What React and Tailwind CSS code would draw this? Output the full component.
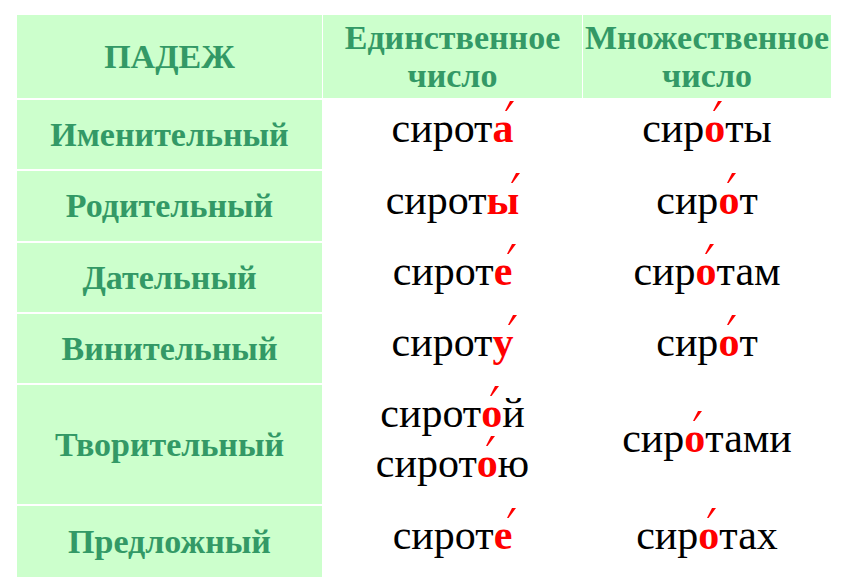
const rows = [
  { name: 'Именительный', sg: [['сирот', 'а', 'left-[80%]', '']], pl: ['сир', 'о', 'left-[62%]', 'ты'], h: 'h-[69px]' },
  { name: 'Родительный', sg: [['сирот', 'ы', 'left-[86%]', '']], pl: ['сир', 'о', 'left-[62%]', 'т'], h: 'h-[70px]' },
  { name: 'Дательный', sg: [['сирот', 'е', 'left-[95%]', '']], pl: ['сир', 'о', 'left-[62%]', 'там'], h: 'h-[69px]' },
  { name: 'Винительный', sg: [['сирот', 'у', 'left-[92%]', '']], pl: ['сир', 'о', 'left-[62%]', 'т'], h: 'h-[69px]' },
  {
    name: 'Творительный',
    sg: [['сирот', 'о', 'left-[62%]', 'й'], ['сирот', 'о', 'left-[62%]', 'ю']],
    pl: ['сир', 'о', 'left-[62%]', 'тами'],
    h: 'h-[119px]',
  },
  { name: 'Предложный', sg: [['сирот', 'е', 'left-[95%]', '']], pl: ['сир', 'о', 'left-[62%]', 'тах'], h: 'h-[71px]' },
];

// stress mark: small red wedge above the vowel
function Stressed({ vowel, at }) {
  return (
    <span className="relative font-bold text-[#ff0000]">
      {vowel}
      <svg className={'absolute top-[-4px] ml-[-4px] h-[10px] w-[9px] ' + at} viewBox="0 0 9 10">
        <polygon points="0,10 5,0 9,0 1.6,10" fill="#ff0000" />
      </svg>
    </span>
  );
}

function Word({ parts }) {
  const [before, vowel, at, after] = parts;
  return (
    <div>
      {before}
      <Stressed vowel={vowel} at={at} />
      {after}
    </div>
  );
}

export default function App() {
  return (
    <div
      className="bg-white pt-[15px] pb-[8px] pl-[17px]"
      style={{ fontFamily: "'Liberation Serif', 'Times New Roman', serif" }}
    >
      <div className="grid w-[814px] grid-cols-[305px_259px_248px] gap-x-px gap-y-[2px]">
        <div className="flex h-[83px] items-center justify-center bg-[#ccffcc] text-[34px] font-bold leading-[38px] text-[#339966]">
          ПАДЕЖ
        </div>
        <div className="flex h-[83px] items-center justify-center bg-[#ccffcc] text-center text-[34px] font-bold leading-[38px] text-[#339966]">
          Единственное
          <br />
          число
        </div>
        <div className="flex h-[83px] items-center justify-center bg-[#ccffcc] text-center text-[34px] font-bold leading-[38px] text-[#339966]">
          Множественное
          <br />
          число
        </div>

        {rows.map((r) => (
          <div key={r.name} className="contents">
            <div className={'flex items-center justify-center bg-[#ccffcc] text-[34px] font-bold leading-[40px] text-[#339966] ' + r.h}>
              {r.name}
            </div>
            <div className={'flex flex-col items-center justify-center pb-[13px] text-[42px] leading-[50px] text-black ' + r.h}>
              {r.sg.map((w, i) => (
                <Word key={i} parts={w} />
              ))}
            </div>
            <div className={'flex flex-col items-center justify-center pb-[13px] text-[42px] leading-[50px] text-black ' + r.h}>
              <Word parts={r.pl} />
            </div>
          </div>
        ))}
      </div>
    </div>
  );
}
